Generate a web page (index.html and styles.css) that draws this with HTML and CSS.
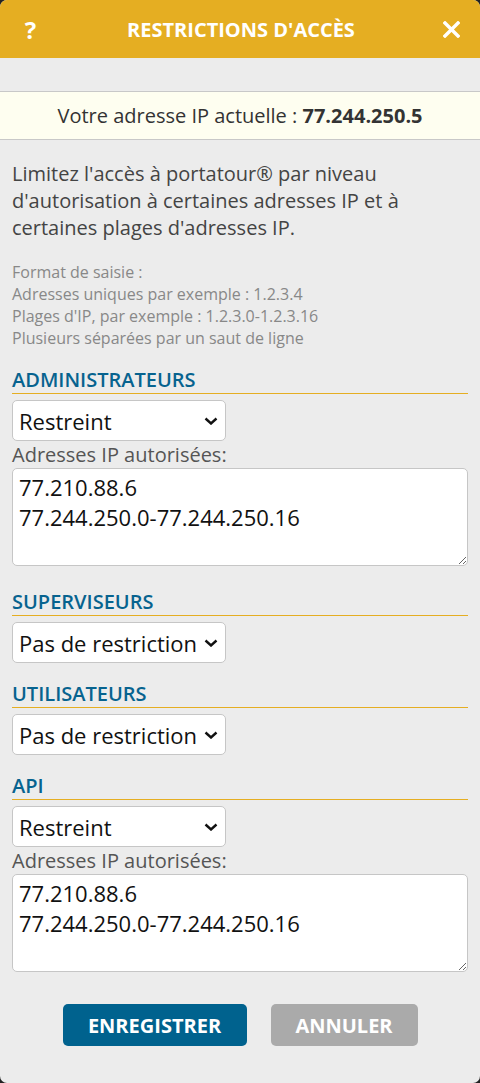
FILE: index.html
```html
<!DOCTYPE html>
<html lang="fr">
<head>
  <meta charset="UTF-8" />
  <meta name="viewport" content="width=device-width, initial-scale=1.0" />
  <title>Restrictions d'accès</title>
  <link rel="stylesheet" href="styles.css">
</head>
<body>
  <div class="dialog">
    <div class="header">
      <span class="help">?</span>
      <h1>RESTRICTIONS D'ACCÈS</h1>
      <span class="close">
        <svg width="17" height="17" viewBox="0 0 17 17"><path d="M2 2 L15 15 M15 2 L2 15" stroke="#fff" stroke-width="3.4" stroke-linecap="square"/></svg>
      </span>
    </div>

    <div class="ip-bar">Votre adresse IP actuelle : <b>77.244.250.5</b></div>

    <div class="content">
      <p class="intro">Limitez l'accès à portatour® par niveau d'autorisation à certaines adresses IP et à certaines plages d'adresses IP.</p>

      <p class="hint">Format de saisie :<br>Adresses uniques par exemple : 1.2.3.4<br>Plages d'IP, par exemple : 1.2.3.0-1.2.3.16<br>Plusieurs séparées par un saut de ligne</p>

      <div class="group">
        <h2>ADMINISTRATEURS</h2>
        <div class="select"><span>Restreint</span><svg class="chev" width="14" height="8" viewBox="0 0 14 8"><path d="M1.5 1.5 L7 6.5 L12.5 1.5" fill="none" stroke="#111" stroke-width="2.4"/></svg></div>
        <label>Adresses IP autorisées:</label>
        <textarea>77.210.88.6
77.244.250.0-77.244.250.16</textarea>
      </div>

      <div class="group">
        <h2>SUPERVISEURS</h2>
        <div class="select"><span>Pas de restriction</span><svg class="chev" width="14" height="8" viewBox="0 0 14 8"><path d="M1.5 1.5 L7 6.5 L12.5 1.5" fill="none" stroke="#111" stroke-width="2.4"/></svg></div>
      </div>

      <div class="group">
        <h2>UTILISATEURS</h2>
        <div class="select"><span>Pas de restriction</span><svg class="chev" width="14" height="8" viewBox="0 0 14 8"><path d="M1.5 1.5 L7 6.5 L12.5 1.5" fill="none" stroke="#111" stroke-width="2.4"/></svg></div>
      </div>

      <div class="group">
        <h2>API</h2>
        <div class="select"><span>Restreint</span><svg class="chev" width="14" height="8" viewBox="0 0 14 8"><path d="M1.5 1.5 L7 6.5 L12.5 1.5" fill="none" stroke="#111" stroke-width="2.4"/></svg></div>
        <label>Adresses IP autorisées:</label>
        <textarea>77.210.88.6
77.244.250.0-77.244.250.16</textarea>
      </div>

      <div class="actions">
        <button class="save">ENREGISTRER</button>
        <button class="cancel">ANNULER</button>
      </div>
    </div>
  </div>
</body>
</html>
```

FILE: styles.css
```css
body {
  margin: 0;
  background: #222;
  font-family: 'Open Sans', sans-serif;
}

.dialog {
  background: #ececec;
  border-radius: 7px;
  overflow: hidden;
  height: 1083px;
}

.header {
  height: 58px;
  background: #e5ae22;
  color: white;
  display: flex;
  align-items: center;
  justify-content: space-between;
  padding: 0 20px 0 22px;
}

.header h1 {
  margin: 0;
  font-size: 20px;
  font-weight: 700;
}

.help {
  font-size: 24px;
  font-weight: 700;
  width: 17px;
  text-align: center;
}

.close {
  display: flex;
}

.ip-bar {
  margin-top: 33px;
  background: #fefef0;
  border-top: 1px solid #c8c8c8;
  border-bottom: 1px solid #c8c8c8;
  height: 47px;
  line-height: 47px;
  text-align: center;
  font-size: 20px;
  color: #333;
}

.content {
  padding: 0 12px;
}

.intro {
  margin: 20px 0 0;
  font-size: 20px;
  line-height: 27px;
  color: #444;
}

.hint {
  margin: 20px 0 0;
  font-size: 16px;
  line-height: 22px;
  color: #888;
}

.group {
  display: flow-root;
  margin-top: 18px;
}

.group h2 {
  margin: 0 0 6px;
  font-size: 20px;
  font-weight: 600;
  color: #07638f;
  line-height: 26px;
  border-bottom: 1px solid #e5ae22;
}

.select {
  width: 214px;
  height: 41px;
  box-sizing: border-box;
  background: white;
  border: 1px solid #c6c6c6;
  border-radius: 5px;
  display: flex;
  align-items: center;
  justify-content: space-between;
  padding: 0 7px 0 6px;
  font-size: 22px;
  color: #111;
}

.chev {
  margin-top: 1px;
}

label {
  display: block;
  font-size: 20px;
  line-height: 27px;
  color: #555;
}

textarea {
  display: block;
  margin-bottom: 5px;
  width: 100%;
  height: 98px;
  box-sizing: border-box;
  border: 1px solid #c6c6c6;
  border-radius: 5px;
  padding: 3px 6px;
  font-family: 'Open Sans', sans-serif;
  font-size: 22px;
  line-height: 30px;
  color: #111;
  resize: vertical;
}

.actions {
  display: flex;
  justify-content: center;
  gap: 24px;
  margin-top: 27px;
}

.actions button {
  height: 42px;
  border: none;
  border-radius: 5px;
  color: white;
  font-family: 'Open Sans', sans-serif;
  font-size: 20px;
  font-weight: 700;
  cursor: pointer;
}

.save {
  width: 184px;
  background: #00628e;
}

.cancel {
  width: 147px;
  background: #aaa;
}
```
